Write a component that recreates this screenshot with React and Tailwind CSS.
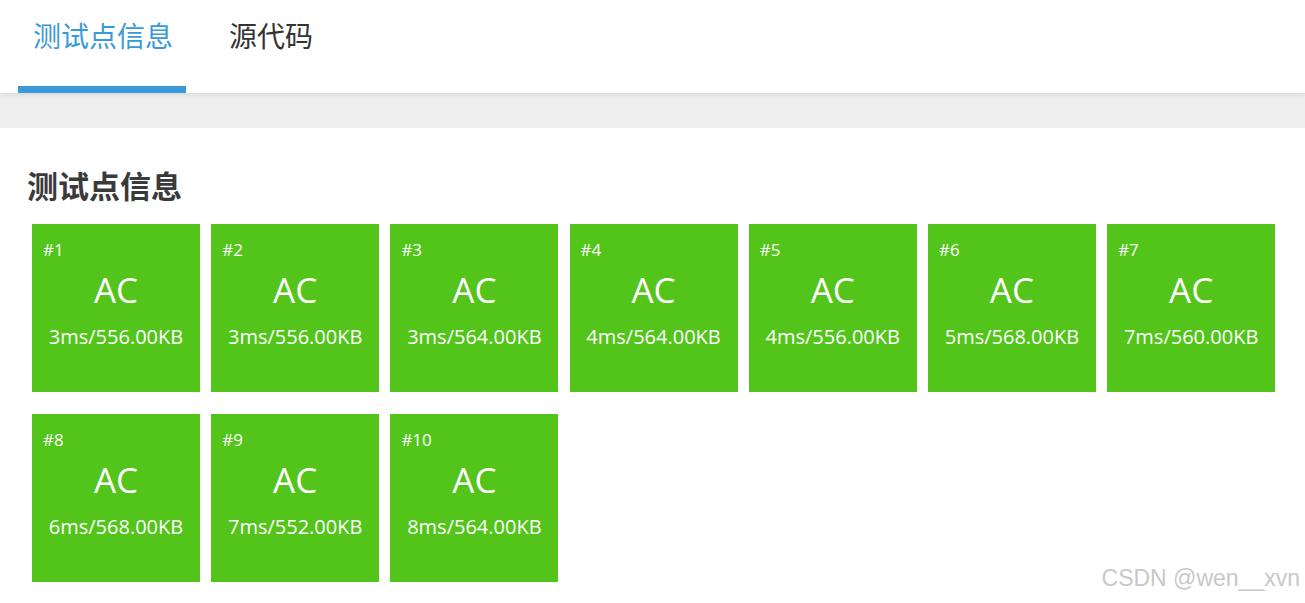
import React from "react";

const cases = [
  ["#1", "3ms/556.00KB"],
  ["#2", "3ms/556.00KB"],
  ["#3", "3ms/564.00KB"],
  ["#4", "4ms/564.00KB"],
  ["#5", "4ms/556.00KB"],
  ["#6", "5ms/568.00KB"],
  ["#7", "7ms/560.00KB"],
  ["#8", "6ms/568.00KB"],
  ["#9", "7ms/552.00KB"],
  ["#10", "8ms/564.00KB"],
];

export default function App() {
  return (
    <div className="relative w-[1305px] h-[603px] overflow-hidden bg-white" style={{ fontFamily: '"Open Sans", "Noto Sans CJK SC", sans-serif' }}>
      <div className="relative z-10 flex h-[93px] bg-white shadow-[0_1px_4px_rgba(0,0,0,0.12)] pl-[18px]">
        <div className="flex flex-col w-[168px]">
          <div className="flex-1 flex items-center pl-[15px] pb-[14px] text-[28px] text-[#3a9ad9]">测试点信息</div>
          <div className="h-[7px] bg-[#3a9ad9]"></div>
        </div>
        <div className="flex items-center pl-[43px] pb-[21px] text-[28px] text-[#333]">源代码</div>
      </div>
      <div className="h-[35px] bg-[#eeeeee]"></div>
      <div className="px-[27px] pt-[38px]">
        <div className="text-[31px] font-bold text-[#3a3a3a] leading-[40px]">测试点信息</div>
        <div className="flex flex-wrap gap-x-[11.2px] gap-y-[22px] pl-[5px] mt-[18px] w-[1260px]">
          {cases.map(([id, stat]) => (
            <div key={id} className="w-[168px] h-[168px] bg-[#52c41a] text-white flex flex-col">
              <div className="text-[17px] leading-[20px] pl-[11px] pt-[16px]">{id}</div>
              <div className="text-[35px] leading-[40px] text-center mt-[10px]">AC</div>
              <div className="text-[20px] leading-[26px] text-center mt-[14px]">{stat}</div>
            </div>
          ))}
        </div>
      </div>
      <div className="absolute right-[5px] bottom-[8px] text-[23px] text-[#c8c8c8]" style={{ fontFamily: '"Liberation Sans", Arial, sans-serif' }}>CSDN @wen__xvn</div>
    </div>
  );
}
